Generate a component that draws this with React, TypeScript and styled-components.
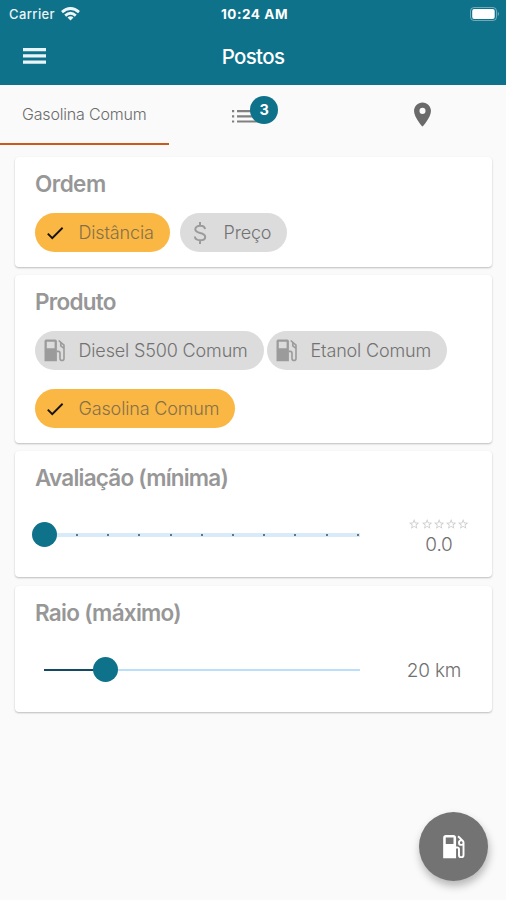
import React from 'react';
import styled, { createGlobalStyle } from 'styled-components';
import { MdCheck, MdLocalGasStation, MdPlace, MdStarBorder } from 'react-icons/md';

const GlobalStyle = createGlobalStyle`
  * { box-sizing: border-box; }
  body { margin: 0; background: #fafafa; font-family: Inter, 'Liberation Sans', sans-serif; }
`;

const Screen = styled.div`
  position: relative;
  display: flex;
  flex-direction: column;
  width: 506px;
  height: 900px;
  overflow: hidden;
  background: #fafafa;
`;

const Header = styled.header`
  height: 85px;
  background: #0f728b;
  color: #fff;
  flex: none;
`;

const StatusBar = styled.div`
  display: grid;
  grid-template-columns: 1fr auto 1fr;
  align-items: center;
  height: 27px;
  padding: 0 6px 0 9px;
  font-size: 13px;
`;

const Carrier = styled.div`
  display: flex;
  align-items: center;
  gap: 6px;
  font-weight: 500;
  letter-spacing: 0.4px;
  opacity: 0.93;
`;

const Clock = styled.div`
  font-size: 13.5px;
  font-weight: 700;
  letter-spacing: 0.55px;
`;

const BatteryIcon = styled.svg`
  justify-self: end;
`;

const AppBar = styled.div`
  display: grid;
  grid-template-columns: 60px 1fr 60px;
  align-items: center;
  height: 58px;
`;

const MenuButton = styled.button`
  display: flex;
  padding: 0;
  margin-left: 23px;
  border: 0;
  background: none;
  color: #e9f5f8;
`;

const PageTitle = styled.h1`
  margin: 0;
  text-align: center;
  font-size: 20.5px;
  font-weight: 500;
  letter-spacing: -0.65px;
`;

const Tabs = styled.nav`
  display: grid;
  grid-template-columns: repeat(3, 1fr);
  height: 60px;
  flex: none;
`;

const Tab = styled.div<{ $active?: boolean }>`
  display: flex;
  align-items: center;
  justify-content: center;
  border-bottom: 2px solid ${p => (p.$active ? '#cb5a1e' : 'transparent')};
  color: #6c6c6c;
  font-size: 16px;
  font-weight: 300;
  letter-spacing: -0.18px;
`;

const BadgeAnchor = styled.div`
  position: relative;
  display: flex;
  margin-left: -13px;
  margin-top: 5px;
`;

const Badge = styled.span`
  position: absolute;
  left: 17.5px;
  top: -14px;
  width: 28px;
  height: 28px;
  border-radius: 50%;
  background: #0f728b;
  color: #fff;
  font-size: 14.5px;
  font-weight: 700;
  line-height: 28px;
  text-align: center;
`;

const PinIcon = styled(MdPlace)`
  margin-left: 2px;
  font-size: 29px;
  color: #6a6a6a;
`;

const Cards = styled.main`
  display: flex;
  flex-direction: column;
  padding: 12px 14px 0 15px;
`;

const Card = styled.section<{ $height: number; $gap: number }>`
  height: ${p => p.$height}px;
  margin-bottom: ${p => p.$gap}px;
  padding: 13px 20px 0;
  border-radius: 4px;
  background: #fff;
  box-shadow: 0 1px 2px rgba(0, 0, 0, 0.25);
`;

const CardTitle = styled.h2<{ $spacing: number }>`
  margin: 0;
  height: 28px;
  line-height: 28px;
  color: #979797;
  font-size: 22.5px;
  font-weight: 600;
  letter-spacing: ${p => p.$spacing}px;
`;

const ChipRow = styled.div<{ $gap: number }>`
  display: flex;
  flex-wrap: wrap;
  column-gap: ${p => p.$gap}px;
  row-gap: 19px;
  padding-top: 15px;
`;

const ChipBox = styled.button<{ $selected?: boolean; $width: number }>`
  display: flex;
  align-items: center;
  width: ${p => p.$width}px;
  height: 39px;
  padding: 0;
  border: 0;
  border-radius: 20px;
  background: ${p => (p.$selected ? '#fab744' : '#dcdcdc')};
  color: ${p => (p.$selected ? '#85704b' : '#727272')};
  font-family: inherit;
  font-size: 18px;
  font-weight: 300;
  white-space: nowrap;
  letter-spacing: -0.15px;
`;

const ChipIcon = styled.span<{ $dark?: boolean }>`
  display: flex;
  justify-content: center;
  width: 39px;
  margin-right: 4.5px;
  color: ${p => (p.$dark ? '#15130f' : '#9b9b9b')};
`;

const SliderRow = styled.div`
  display: grid;
  grid-template-columns: 334px 1fr;
  height: 60px;
  margin-top: 11px;
  align-items: center;
`;

const Track = styled.div<{ $thick?: boolean }>`
  position: relative;
  margin: 3px 9px 0;
  height: ${p => (p.$thick ? 4 : 2)}px;
  background: ${p => (p.$thick ? '#d9eaf8' : '#b9dffb')};
`;

const Filled = styled.div`
  height: 2px;
  background: #134a63;
`;

const Thumb = styled.div`
  position: absolute;
  top: 50%;
  width: 25px;
  height: 25px;
  margin: -12.5px 0 0 -12.5px;
  border-radius: 50%;
  background: #0f728b;
`;

const Tick = styled.i`
  position: absolute;
  top: 1px;
  width: 2px;
  height: 2px;
  background: #5f7787;
`;

const Value = styled.div<{ $inset: number; $drop: number }>`
  display: flex;
  flex-direction: column;
  align-items: center;
  margin-left: ${p => p.$inset}px;
  margin-top: ${p => p.$drop}px;
  color: #707070;
  font-size: 19px;
  font-weight: 300;
  line-height: 24px;
  letter-spacing: -0.15px;
  white-space: nowrap;
`;

const Stars = styled.div`
  display: flex;
  height: 15px;
  color: #cdcdcd;
  font-size: 12.3px;
  letter-spacing: 0;
`;

const Fab = styled.button`
  position: absolute;
  left: 418.5px;
  top: 812px;
  display: flex;
  align-items: center;
  justify-content: center;
  width: 69px;
  height: 69px;
  padding: 0;
  border: 0;
  border-radius: 50%;
  background: #737373;
  color: #fff;
  font-size: 31px;
  box-shadow: 1px 5px 9px rgba(0, 0, 0, 0.28);
`;

const MenuIcon = () => (
  <svg width="23" height="16" viewBox="0 0 23 16" fill="currentColor">
    <path d="M0 0h23v3.2H0zM0 6.3h23v3.2H0zM0 12.6h23v3.2H0z" />
  </svg>
);

const WifiIcon = () => (
  <svg width="19" height="14" viewBox="0 0 19 14" fill="none" stroke="#fff" strokeWidth="2.8">
    <path d="M1 5.1Q9.5 -2.2 18 5.1" />
    <path d="M4.2 8.6Q9.5 4 14.8 8.6" />
    <path d="M9.5 13.4L6.5 10.4Q9.5 8 12.5 10.4Z" fill="#fff" stroke="none" />
  </svg>
);

const ListIcon = () => (
  <svg width="28" height="14" viewBox="0 0 28 14" fill="#808080">
    <path d="M0 0h2.2v2.2H0zM0 5.2h2.2v2.2H0zM0 10.4h2.2v2.2H0zM5 0h22v2.2H5zM5 5.2h22v2.2H5zM5 10.4h22v2.2H5z" />
  </svg>
);

const DollarIcon = () => (
  <svg width="14" height="24" viewBox="0 0 14 24" fill="none" stroke="currentColor" strokeWidth="2">
    <path d="M7 1v4M7 19v4M12 8.2C11.8 6 10 4.8 7.2 4.8C4.300 4.800 2.300 6.200 2.300 8.300C2.300 10.500 4.200 11.300 7 12C10 12.700 12.200 13.500 12.200 15.900C12.200 18 10.200 19.200 7.200 19.200C4.100 19.200 2.100 17.900 1.800 15.500" />
  </svg>
);

const PumpIcon = () => (
  <svg width="22" height="23" viewBox="0 0 22 23">
    <path fill="currentColor" fillRule="evenodd" d="M2.2 0.5h9a1.700 1.700 0 0 1 1.700 1.700V22.300H0.500V2.200a1.700 1.700 0 0 1 1.700-1.700zM2.800 2.800v6.400h7.800V2.800z" />
    <path fill="none" stroke="currentColor" strokeWidth="1.6" d="M14.700 1.500l5.300 4.600v13.300a2 2 0 0 1-4 0v-5.200a1.800 1.800 0 0 0-1.800-1.800h-1.500M16.800 3.600v3.200l3.200 2.500" />
  </svg>
);

const chipIcons = {
  check: <MdCheck size={22} />,
  money: <DollarIcon />,
  pump: <PumpIcon />,
};

type ChipProps = { icon: keyof typeof chipIcons; label: string; width: number; selected?: boolean };

const Chip = ({ icon, label, width, selected }: ChipProps) => (
  <ChipBox $width={width} $selected={selected}>
    <ChipIcon $dark={selected}>{chipIcons[icon]}</ChipIcon>
    {label}
  </ChipBox>
);

const ticks = Array.from({ length: 10 }, (_, i) => 32 + i * 31.2);

export default function App() {
  return (
    <Screen>
      <GlobalStyle />
      <Header>
        <StatusBar>
          <Carrier>Carrier <WifiIcon /></Carrier>
          <Clock>10:24 AM</Clock>
          <BatteryIcon width="31" height="14" viewBox="0 0 31 14">
            <rect x="1.500" y="0.5" width="26" height="13" rx="3.5" fill="none" stroke="#fff" strokeOpacity=".4" />
            <rect x="3.200" y="2" width="22.500" height="10" rx="2" fill="#fff" />
            <path d="M28.8 4.8q2 2.2 0 4.4z" fill="#fff" fillOpacity=".5" />
          </BatteryIcon>
        </StatusBar>
        <AppBar>
          <MenuButton aria-label="Menu"><MenuIcon /></MenuButton>
          <PageTitle>Postos</PageTitle>
        </AppBar>
      </Header>
      <Tabs>
        <Tab $active>Gasolina Comum</Tab>
        <Tab>
          <BadgeAnchor>
            <ListIcon />
            <Badge>3</Badge>
          </BadgeAnchor>
        </Tab>
        <Tab><PinIcon /></Tab>
      </Tabs>
      <Cards>
        <Card $height={110} $gap={8}>
          <CardTitle $spacing={-0.55}>Ordem</CardTitle>
          <ChipRow $gap={10}>
            <Chip icon="check" label="Distância" width={135} selected />
            <Chip icon="money" label="Preço" width={107} />
          </ChipRow>
        </Card>
        <Card $height={168} $gap={8}>
          <CardTitle $spacing={-0.75}>Produto</CardTitle>
          <ChipRow $gap={3}>
            <Chip icon="pump" label="Diesel S500 Comum" width={229} />
            <Chip icon="pump" label="Etanol Comum" width={180} />
            <Chip icon="check" label="Gasolina Comum" width={200} selected />
          </ChipRow>
        </Card>
        <Card $height={126} $gap={9}>
          <CardTitle $spacing={-0.78}>Avaliação (mínima)</CardTitle>
          <SliderRow>
            <Track $thick>
              {ticks.map(x => <Tick key={x} style={{ left: x }} />)}
              <Thumb style={{ left: 0 }} />
            </Track>
            <Value $inset={37} $drop={9}>
              <Stars>{[1, 2, 3, 4, 5].map(n => <MdStarBorder key={n} />)}</Stars>
              0.0
            </Value>
          </SliderRow>
        </Card>
        <Card $height={126} $gap={0}>
          <CardTitle $spacing={-0.72}>Raio (máximo)</CardTitle>
          <SliderRow>
            <Track>
              <Filled style={{ width: 61 }} />
              <Thumb style={{ left: 61 }} />
            </Track>
            <Value $inset={27} $drop={6}>20 km</Value>
          </SliderRow>
        </Card>
      </Cards>
      <Fab aria-label="Postos"><MdLocalGasStation /></Fab>
    </Screen>
  );
}
